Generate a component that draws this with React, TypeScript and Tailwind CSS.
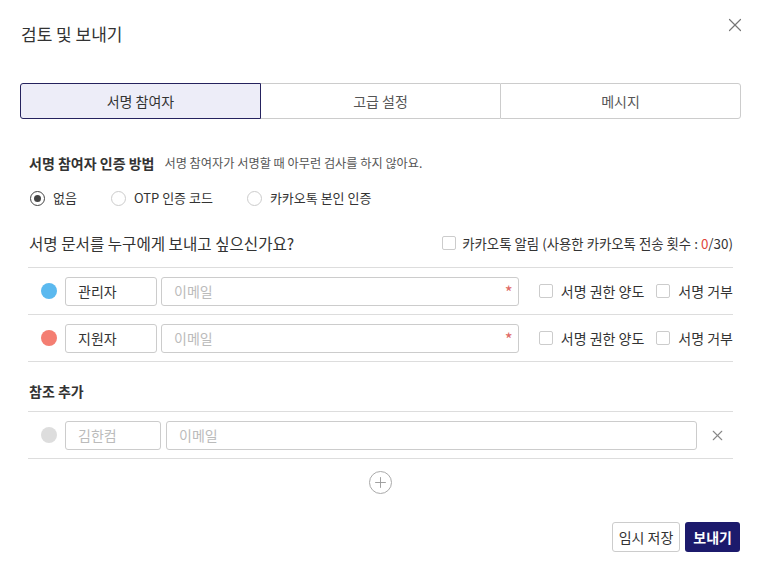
import { X, Plus } from 'lucide-react';

const FONT = { fontFamily: '"Noto Sans CJK KR", "Noto Sans", sans-serif' };

function Radio({ label, checked }: { label: string; checked?: boolean }) {
    return (
        <label className="flex items-center gap-[8px] text-[13px] text-[#333]">
            <span
                className={`w-[15px] h-[15px] rounded-full border flex items-center justify-center ${
                    checked ? 'border-[#444]' : 'border-[#ccc]'
                }`}
            >
                {checked && <span className="w-[7px] h-[7px] rounded-full bg-[#444]" />}
            </span>
            {label}
        </label>
    );
}

function Check({ label }: { label: React.ReactNode }) {
    return (
        <label className="flex items-center gap-[8px] text-[14px] text-[#333] whitespace-nowrap">
            <span className="w-[14px] h-[14px] rounded-[2px] border border-[#ccc] bg-white" />
            {label}
        </label>
    );
}

interface Signer {
    name: string;
    color: string;
}

const signers: Signer[] = [
    { name: '관리자', color: 'bg-[#5bb9ef]' },
    { name: '지원자', color: 'bg-[#f47e72]' },
];

export default function App() {
    return (
        <div style={FONT} className="w-[761px] h-[564px] bg-white text-[#333] overflow-hidden">
            {/* 헤더 */}
            <div className="flex justify-between items-start pl-[21px] pr-[15px] pt-[14px]">
                <h2 className="mt-[10px] text-[17px] leading-[20px] text-[#333]">검토 및 보내기</h2>
                <X className="w-[22px] h-[22px] text-[#777]" strokeWidth={1.3} />
            </div>

            {/* 탭 */}
            <div className="mx-[20px] mt-[39px] flex h-[36px] text-[14px]">
                <div className="flex-1 flex items-center justify-center bg-[#ededf8] border border-[#25225e] rounded-l-[3px] text-[#333]">
                    서명 참여자
                </div>
                <div className="flex-1 flex items-center justify-center border-y border-[#ccc] text-[#555]">
                    고급 설정
                </div>
                <div className="flex-1 flex items-center justify-center border border-[#ccc] rounded-r-[3px] text-[#555]">
                    메시지
                </div>
            </div>

            <div className="px-[28px]">
                {/* 인증 방법 */}
                <div className="mt-[34px] flex items-center gap-[10px] pl-[1px] leading-[20px]">
                    <span className="text-[14px] font-bold text-[#333]">서명 참여자 인증 방법</span>
                    <span className="text-[12.2px] text-[#555]">서명 참여자가 서명할 때 아무런 검사를 하지 않아요.</span>
                </div>
                <div className="mt-[15px] h-[20px] flex items-center gap-[34px] pl-[2px]">
                    <Radio label="없음" checked />
                    <Radio label="OTP 인증 코드" />
                    <Radio label="카카오톡 본인 인증" />
                </div>

                {/* 수신자 */}
                <div className="mt-[25px] flex justify-between items-center leading-[20px] pl-[1px]">
                    <span className="text-[15.6px] text-[#333]">서명 문서를 누구에게 보내고 싶으신가요?</span>
                    <label className="flex items-center gap-[6px] text-[13.4px] text-[#333]">
                        <span className="w-[14px] h-[14px] rounded-[2px] border border-[#ccc]" />
                        <span>
                            카카오톡 알림 (사용한 카카오톡 전송 횟수 : <span className="text-[#e0463c]">0</span>/30)
                        </span>
                    </label>
                </div>

                <div className="mt-[14px] border-t border-[#ddd]">
                    {signers.map((s) => (
                        <div key={s.name} className="flex items-center h-[47px] border-b border-[#ddd] pl-[13px]">
                            <span className={`w-[16px] h-[16px] rounded-full ${s.color}`} />
                            <div className="ml-[8px] w-[92px] h-[29px] border border-[#ccc] rounded-[3px] flex items-center px-[12px] text-[14px] text-[#333]">
                                {s.name}
                            </div>
                            <div className="ml-[4px] flex-1 h-[29px] border border-[#ccc] rounded-[3px] flex items-center justify-between pl-[12px] pr-[5px] text-[14px] text-[#bbb]">
                                이메일
                                <span className="text-[#e06b66] text-[17px] leading-none self-start mt-[5px]">*</span>
                            </div>
                            <div className="ml-[20px] flex items-center gap-[12px]">
                                <Check label="서명 권한 양도" />
                                <Check label="서명 거부" />
                            </div>
                        </div>
                    ))}
                </div>

                {/* 참조 */}
                <div className="mt-[19px] leading-[20px] pl-[1px] text-[14px] font-bold text-[#333]">참조 추가</div>
                <div className="mt-[10px] border-y border-[#ddd] h-[48px] flex items-center pl-[13px] pr-[7px]">
                    <span className="w-[16px] h-[16px] rounded-full bg-[#ddd]" />
                    <div className="ml-[8px] w-[96px] h-[29px] border border-[#ccc] rounded-[3px] flex items-center px-[12px] text-[14px] text-[#bbb]">
                        김한컴
                    </div>
                    <div className="ml-[5px] flex-1 h-[29px] border border-[#ccc] rounded-[3px] flex items-center px-[12px] text-[14px] text-[#bbb]">
                        이메일
                    </div>
                    <X className="ml-[12px] w-[17px] h-[17px] text-[#888]" strokeWidth={1.5} />
                </div>

                <div className="mt-[12px] flex justify-center">
                    <span className="w-[23px] h-[23px] rounded-full border border-[#aaa] flex items-center justify-center">
                        <Plus className="w-[17px] h-[17px] text-[#999]" strokeWidth={1.3} />
                    </span>
                </div>
            </div>

            {/* 버튼 */}
            <div className="mt-[28px] flex justify-end gap-[5px] pr-[21px]">
                <button className="h-[30px] px-[6px] border border-[#ccc] rounded-[3px] bg-white text-[14px] text-[#333]">
                    임시 저장
                </button>
                <button className="h-[30px] px-[8px] rounded-[3px] bg-[#1c1a6c] text-[14px] font-bold text-white">
                    보내기
                </button>
            </div>
        </div>
    );
}
